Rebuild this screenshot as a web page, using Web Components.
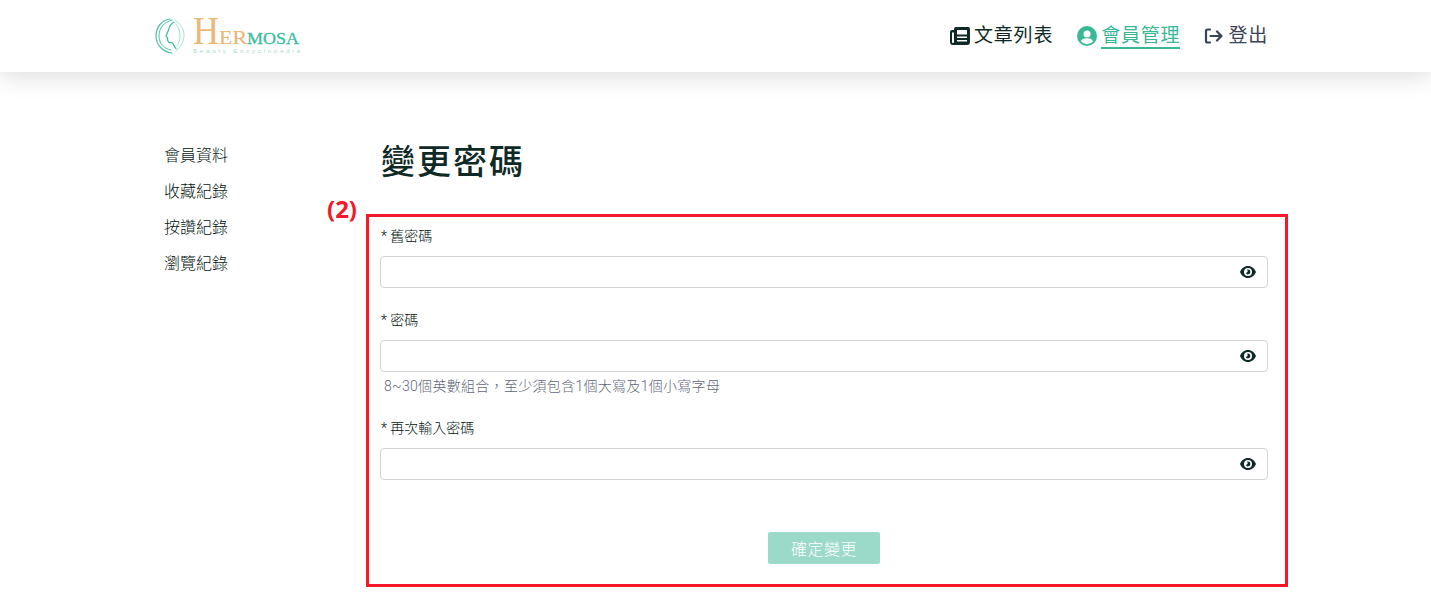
<!DOCTYPE html>
<html lang="zh-Hant">
<head>
<meta charset="utf-8">
<title>變更密碼</title>
<style>
html, body { margin: 0; padding: 0; background: #fff; }
body { font-family: Roboto, "Noto Sans CJK TC", sans-serif; color: #0f2a26; }
</style>
</head>
<body>
<site-header>
    <nav-link icon="book">文章列表</nav-link>
    <nav-link icon="user" active>會員管理</nav-link>
    <nav-link icon="logout" muted>登出</nav-link>
</site-header>
<page-body>
    <side-menu slot="side">
        <a>會員資料</a>
        <a>收藏紀錄</a>
        <a>按讚紀錄</a>
        <a>瀏覽紀錄</a>
    </side-menu>
    <password-form>
        <password-field label="舊密碼"></password-field>
        <password-field label="密碼" hint="8~30個英數組合，至少須包含1個大寫及1個小寫字母"></password-field>
        <password-field label="再次輸入密碼"></password-field>
    </password-form>
</page-body>
<script>
class SiteHeader extends HTMLElement{
    constructor(){
        super();
        this.attachShadow({mode : "open"});
    }
    connectedCallback(){
        this.shadowRoot.innerHTML = `
        <style>
            :host {
                display: flex;
                justify-content: space-between;
                align-items: center;
                box-sizing: border-box;
                height: 72px;
                padding: 0 163px 0 155px;
                background: #fff;
                box-shadow: 0 4px 24px rgba(0,0,0,.14);
            }
            nav { display: flex; align-items: center; gap: 24px; }
            .logo { display: block; margin-top: -8px; }
            text { font-family: "Liberation Serif", serif; }
        </style>
        <svg class="logo" width="146" height="50" viewBox="0 -10 146 50">
            <g fill="none" stroke-linecap="round">
                <path stroke="#4cc3a6" stroke-width="1.200" d="M15 2C7 3 1 10 1 19c0 9 7 16 16 17"/>
                <path stroke="#4cc3a6" stroke-width="1" d="M17 3C9 5 4 11 4 19c0 7 5 13 12 14"/>
                <path stroke="#3dbd9d" stroke-width="1.300" d="M19 5c-3 2-5 5-5.500 8-.3 2-2.500 5-2.500 6 0 1 1.500 1 1.500 2 0 2 0 4 2 4.500 1.500.3 3 .2 3.500 1 .8 1.500 1 3 3 5"/>
                <path stroke="#a5e2d2" stroke-width="1" d="M20 3c5 3 9 9 9 15 0 6-3 12-8 16"/>
                <path stroke="#a5e2d2" stroke-width="1" d="M21 7c3 4 4 8 4 12 0 4-1 7-3 10"/>
            </g>
            <text x="38" y="27" font-size="39" fill="#eab878" textLength="26" lengthAdjust="spacingAndGlyphs">H</text>
            <text x="64" y="27" font-size="18" fill="#eab878" stroke="#eab878" stroke-width=".2" textLength="28" lengthAdjust="spacingAndGlyphs">ER</text>
            <text x="92" y="27" font-size="17" fill="#3dbd9d" stroke="#3dbd9d" stroke-width=".3" textLength="52" lengthAdjust="spacingAndGlyphs">MOSA</text>
            <text x="38" y="36" font-size="6" fill="#a8dccb" textLength="107" style="font-family:'Liberation Sans',sans-serif">Beauty Encyclopedia</text>
        </svg>
        <nav><slot></slot></nav>
        `;
    }
}

const NAV_ICONS = {
    book: `<svg width="20" height="20" viewBox="0 0 20 20"><path fill="#0f2a26" fill-rule="evenodd" d="M6 1h12a2 2 0 0 1 2 2v13a3 3 0 0 1-3 3H3a3 3 0 0 1-3-3V6a2 2 0 0 1 2-2h2V3a2 2 0 0 1 2-2zM2 6.500V16a1 1 0 0 0 2 0V6.500zM7 4v4.500h10V4zm0 6.500v1.500h10v-1.500zm0 3.500v1.500h10V14z"/></svg>`,
    user: `<svg width="20" height="20" viewBox="0 0 20 20"><circle cx="10" cy="10" r="10" fill="#3ab795"/><circle cx="10" cy="8" r="3.500" fill="#fff"/><path fill="#fff" d="M3.800 15.200C5 12.800 7 12.200 10 12.200s5 .6 6.200 3a8 8 0 0 1-12.400 0z"/></svg>`,
    logout: `<svg width="20" height="20" viewBox="0 0 20 20" fill="none" stroke="#3a4358" stroke-width="2.200" stroke-linecap="round" stroke-linejoin="round"><path d="M6 3.500H3.500A1.500 1.500 0 0 0 2 5v10a1.500 1.500 0 0 0 1.500 1.500H6"/><path d="M6.500 10H17.500M13 5.500l4.500 4.500L13 14.500"/></svg>`
};

class NavLink extends HTMLElement{
    constructor(){
        super();
        this.attachShadow({mode : "open"});
    }
    connectedCallback(){
        this.shadowRoot.innerHTML = `
        <style>
            :host {
                display: flex;
                align-items: center;
                gap: 4px;
                font-size: 19px;
                font-weight: 400;
                letter-spacing: .8px;
                color: #0f2a26;
            }
            :host([active]) { color: #3ab795; }
            :host([muted]) { color: #3a4358; }
            span { display: block; height: 24px; line-height: 26px; border-bottom: 2px solid transparent; }
            :host([active]) span { border-bottom-color: #3ab795; }
            svg { display: block; }
        </style>
        ${NAV_ICONS[this.getAttribute("icon")]}
        <span><slot></slot></span>
        `;
    }
}

class PageBody extends HTMLElement{
    constructor(){
        super();
        this.attachShadow({mode : "open"});
    }
    connectedCallback(){
        this.shadowRoot.innerHTML = `
        <style>
            :host {
                display: flex;
                padding: 65px 143px 0 164px;
            }
            .side { width: 202px; flex: none; }
            .main { flex: 1; min-width: 0; }
            h1 {
                margin: 1px 0 28px 15px;
                font-size: 34px;
                line-height: 48px;
                font-weight: 500;
                letter-spacing: 2px;
                color: #0f2a26;
            }
        </style>
        <div class="side"><slot name="side"></slot></div>
        <div class="main">
            <h1>變更密碼</h1>
            <slot></slot>
        </div>
        `;
    }
}

class SideMenu extends HTMLElement{
    constructor(){
        super();
        this.attachShadow({mode : "open"});
    }
    connectedCallback(){
        this.shadowRoot.innerHTML = `
        <style>
            :host {
                display: flex;
                flex-direction: column;
                gap: 12px;
                font-size: 16px;
                font-weight: 300;
                line-height: 24px;
                color: #04140f;
                padding-top: 7px;
            }
            ::slotted(a) { display: block; }
        </style>
        <slot></slot>
        `;
    }
}

class PasswordForm extends HTMLElement{
    constructor(){
        super();
        this.attachShadow({mode : "open"});
    }
    connectedCallback(){
        this.shadowRoot.innerHTML = `
        <style>
            :host {
                display: block;
                position: relative;
                box-sizing: border-box;
                height: 373px;
                border: 3px solid #f5182b;
                padding: 9px 17px 0 11px;
            }
            .mark {
                position: absolute;
                left: -42px;
                top: -22px;
                font: 700 24px/28px "Open Sans", sans-serif;
                color: #f5182b;
            }
            .fields { display: flex; flex-direction: column; gap: 22px; }
            .actions { display: flex; justify-content: center; margin-top: 52px; }
            button {
                width: 112px;
                height: 32px;
                padding: 0;
                border: 0;
                border-radius: 2px;
                background: #9bd9c8;
                color: #fff;
                font: inherit;
                font-size: 16px;
                font-weight: 300;
                letter-spacing: .5px;
            }
        </style>
        <span class="mark">(2)</span>
        <div class="fields"><slot></slot></div>
        <div class="actions"><button type="button">確定變更</button></div>
        `;
    }
}

class PasswordField extends HTMLElement{
    constructor(){
        super();
        this.attachShadow({mode : "open"});
    }
    connectedCallback(){
        const hint = this.getAttribute("hint");
        this.shadowRoot.innerHTML = `
        <style>
            :host { display: block; }
            label {
                display: block;
                font-size: 14px;
                font-weight: 300;
                line-height: 20px;
                padding: 0 0 10px 1px;
                color: #04140f;
            }
            .box {
                display: flex;
                align-items: center;
                justify-content: flex-end;
                box-sizing: border-box;
                height: 32px;
                padding-right: 11px;
                border: 1px solid #d3d3d3;
                border-radius: 4px;
            }
            input { flex: 1; min-width: 0; border: 0; outline: 0; background: none; padding: 0 8px; }
            svg { display: block; flex: none; }
            p {
                margin: 0;
                padding: 4px 0 0 4px;
                font-size: 14px;
                font-weight: 300;
                line-height: 20px;
                letter-spacing: .3px;
                color: #62667a;
            }
        </style>
        <label>* ${this.getAttribute("label")}</label>
        <div class="box">
            <input type="password">
            <svg width="16" height="12" viewBox="0 0 16 12">
                <path fill="#0f2a26" fill-rule="evenodd" d="M8 0c3.600 0 6.600 2.400 8 6-1.400 3.600-4.400 6-8 6S1.400 9.600 0 6c1.400-3.600 4.400-6 8-6zm0 2a4 4 0 1 0 0 8 4 4 0 0 0 0-8zm0 1.600a2.400 2.400 0 1 1-2.300 3.100c.9.300 2-.5 2-1.500 0-.6-.2-1.200-.6-1.500.3 0 .6-.1.900-.1z"/>
            </svg>
        </div>
        ${hint ? `<p>${hint}</p>` : ""}
        `;
    }
}

customElements.define("site-header", SiteHeader);
customElements.define("nav-link", NavLink);
customElements.define("page-body", PageBody);
customElements.define("side-menu", SideMenu);
customElements.define("password-form", PasswordForm);
customElements.define("password-field", PasswordField);
</script>
</body>
</html>
